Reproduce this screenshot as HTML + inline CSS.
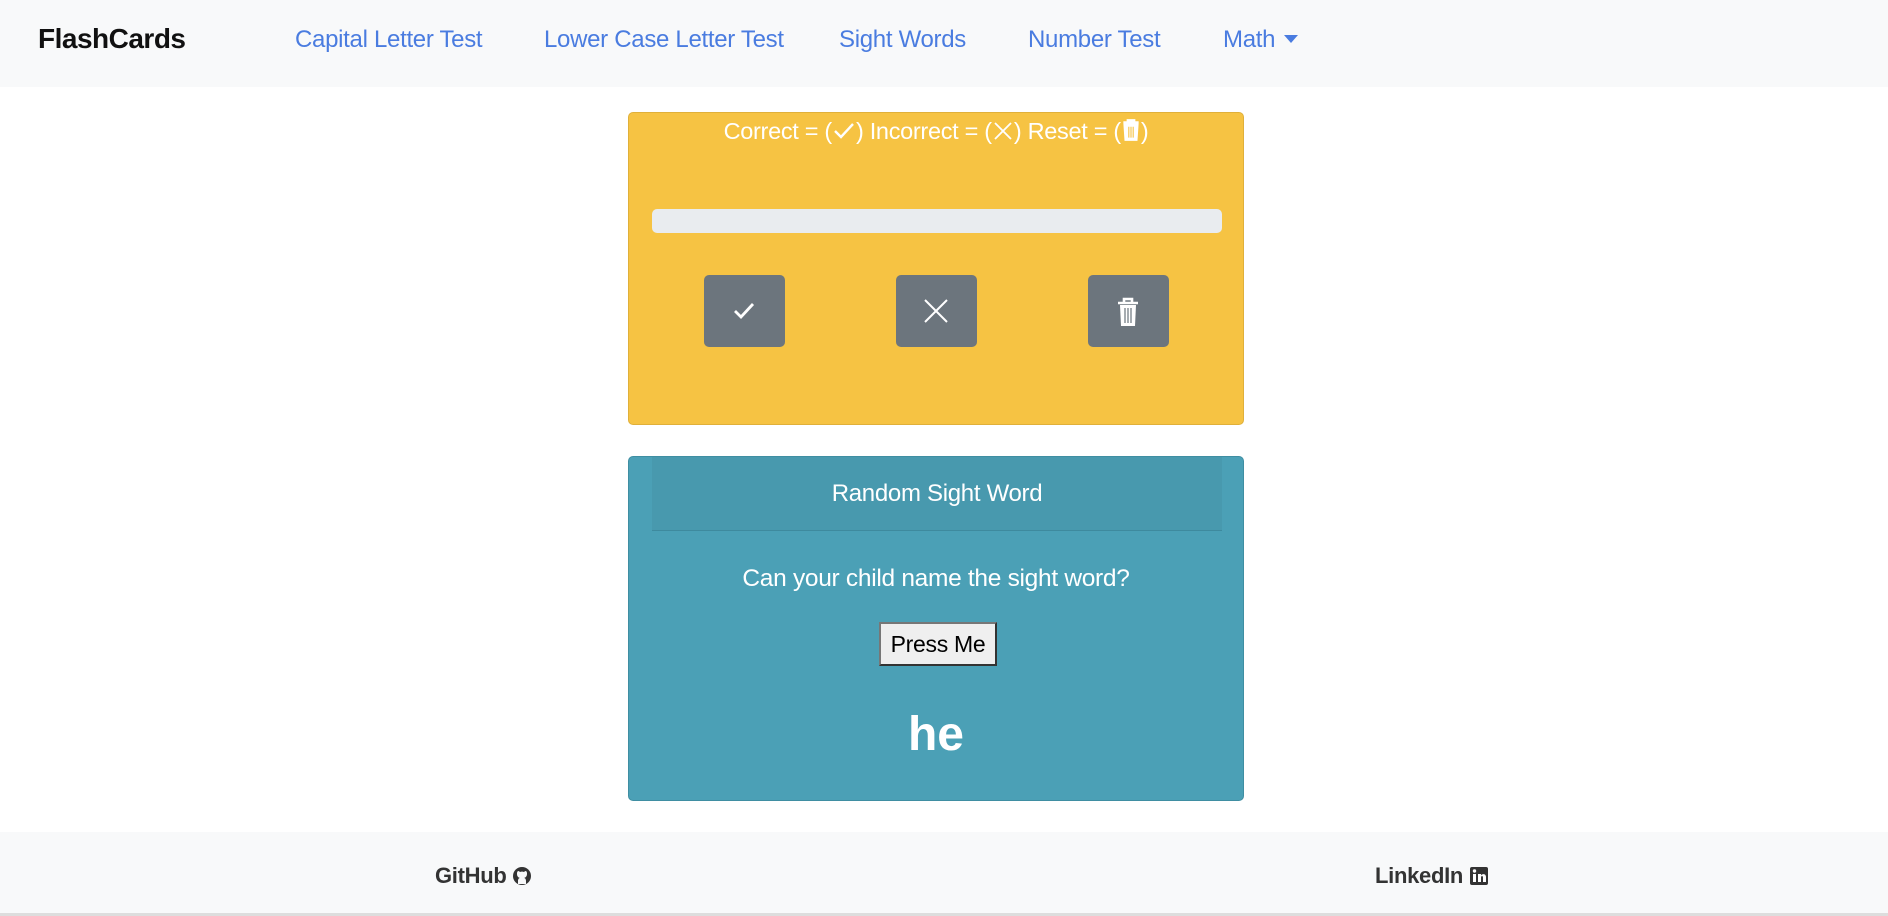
<!DOCTYPE html>
<html><head><meta charset="utf-8"><style>
*{box-sizing:border-box;margin:0;padding:0}
body{width:1888px;height:916px;overflow:hidden;background:#fff;font-family:"Liberation Sans",sans-serif;position:relative}
.nav{position:absolute;left:0;top:0;width:1888px;height:87px;background:#f8f9fa}
.brand{position:absolute;left:38px;top:23px;font-size:28px;font-weight:bold;color:#111;letter-spacing:-0.5px}
.nl{position:absolute;top:26px;font-size:24px;color:#4a7ce0;letter-spacing:-0.3px}
.caret{position:absolute;left:1284px;top:35px;width:0;height:0;border-left:7px solid transparent;border-right:7px solid transparent;border-top:8px solid #4a7ce0}
.yc{position:absolute;left:628px;top:112px;width:616px;height:313px;background:#f6c343;border:1px solid #e0b03a;border-radius:5px}
.yt{position:absolute;left:0;width:100%;top:5px;text-align:center;color:#fff;font-size:23.5px;letter-spacing:-0.3px}
.pb{position:absolute;left:23px;top:96px;width:570px;height:24px;background:#e9ecef;border-radius:5px}
.btn{position:absolute;top:162px;width:81px;height:72px;background:#6c757d;border-radius:5px}
.btn svg{position:absolute;left:25px;top:21px}
.tc{position:absolute;left:628px;top:456px;width:616px;height:345px;background:#4ba0b6;border:1px solid #3f8ea2;border-radius:5px}
.th{position:absolute;left:23px;top:0;width:570px;height:74px;background:#4899ae;border-bottom:1px solid #3e8a9e;color:#fff;font-size:24px;text-align:center;line-height:74px;letter-spacing:-0.3px}
.q{position:absolute;left:0;width:100%;top:108px;text-align:center;color:#fff;font-size:24.5px;letter-spacing:-0.3px}
.pm{position:absolute;left:250px;top:165px;width:118px;height:44px;background:#efefef;border:2px solid #333;border-top-color:#777;border-left-color:#777;font-size:23px;text-align:center;line-height:40px;color:#000;letter-spacing:-0.3px}
.he{position:absolute;left:0;width:100%;top:250px;text-align:center;color:#fff;font-size:48px;font-weight:bold}
.ft{position:absolute;left:0;top:832px;width:1888px;height:84px;background:#f8f9fa}
.fl{position:absolute;top:31px;font-size:22px;font-weight:bold;color:#333;letter-spacing:-0.3px}
.sb{position:absolute;left:0;top:913px;width:1888px;height:3px;background:#ddd}
</style></head><body>
<div class="nav">
<div class="brand">FlashCards</div>
<div class="nl" style="left:295px">Capital Letter Test</div>
<div class="nl" style="left:544px">Lower Case Letter Test</div>
<div class="nl" style="left:839px">Sight Words</div>
<div class="nl" style="left:1028px">Number Test</div>
<div class="nl" style="left:1223px">Math</div>
<div class="caret"></div>
</div>
<div class="yc">
<div class="yt">Correct = (<svg width="24" height="22" viewBox="0 0 24 22" style="vertical-align:-3px"><path d="M3 11l6 6 12-13" fill="none" stroke="#fff" stroke-width="2.4"/></svg>) Incorrect = (<svg width="22" height="22" viewBox="0 0 22 22" style="vertical-align:-3px"><path d="M3 3l16 16M19 3L3 19" fill="none" stroke="#fff" stroke-width="1.8"/></svg>) Reset = (<svg width="20" height="24" viewBox="0 0 18 22" style="vertical-align:-3px"><path d="M2 4h14M6 4V2h6v2M3 5l1 15h10l1-15" fill="#fff" stroke="#fff" stroke-width="2"/><path d="M7 8v10M9 8v10M11 8v10" stroke="#f6c343" stroke-width="1"/></svg>)</div>
<div class="pb"></div>
<div class="btn" style="left:75px"><svg width="30" height="30" viewBox="0 0 30 30"><path d="M6 15l6 6 12-13" fill="none" stroke="#fff" stroke-width="2.8"/></svg></div>
<div class="btn" style="left:267px"><svg width="30" height="30" viewBox="0 0 30 30"><path d="M4 4l22 22M26 4L4 26" fill="none" stroke="#fff" stroke-width="2"/></svg></div>
<div class="btn" style="left:459px"><svg width="30" height="34" viewBox="0 0 30 34"><path d="M5 7h20M11 7V3h8v4" fill="none" stroke="#fff" stroke-width="2.6"/><path d="M7 9h16l-1 21H8z" fill="#fff"/><path d="M12 12v15M15 12v15M18 12v15" stroke="#6c757d" stroke-width="1.2"/></svg></div>
</div>
<div class="tc">
<div class="th">Random Sight Word</div>
<div class="q">Can your child name the sight word?</div>
<div class="pm">Press Me</div>
<div class="he">he</div>
</div>
<div class="ft">
<div class="fl" style="left:435px">GitHub <svg width="20" height="20" viewBox="0 0 20 20" style="vertical-align:-3px"><circle cx="10" cy="10" r="9" fill="#333"/><path d="M6 15c0-2 1-3 2-3-3-1-3-3-3-5 0-1 1-2 1-2s1 0 2 1c1-.5 3-.5 4 0 1-1 2-1 2-1s1 1 1 2c0 2 0 4-3 5 1 0 2 1 2 3v3H6z" fill="#f8f9fa"/></svg></div>
<div class="fl" style="left:1375px">LinkedIn <svg width="20" height="20" viewBox="0 0 20 20" style="vertical-align:-3px"><rect x="1" y="1" width="18" height="18" rx="2" fill="#333"/><rect x="4" y="8" width="3" height="8" fill="#fff"/><circle cx="5.5" cy="5" r="1.7" fill="#fff"/><path d="M9 8h3v1.5c1-2 5-2 5 1.5V16h-3v-4.5c0-2-2-2-2 0V16H9z" fill="#fff"/></svg></div>
</div>
<div class="sb"></div>
</body></html>
